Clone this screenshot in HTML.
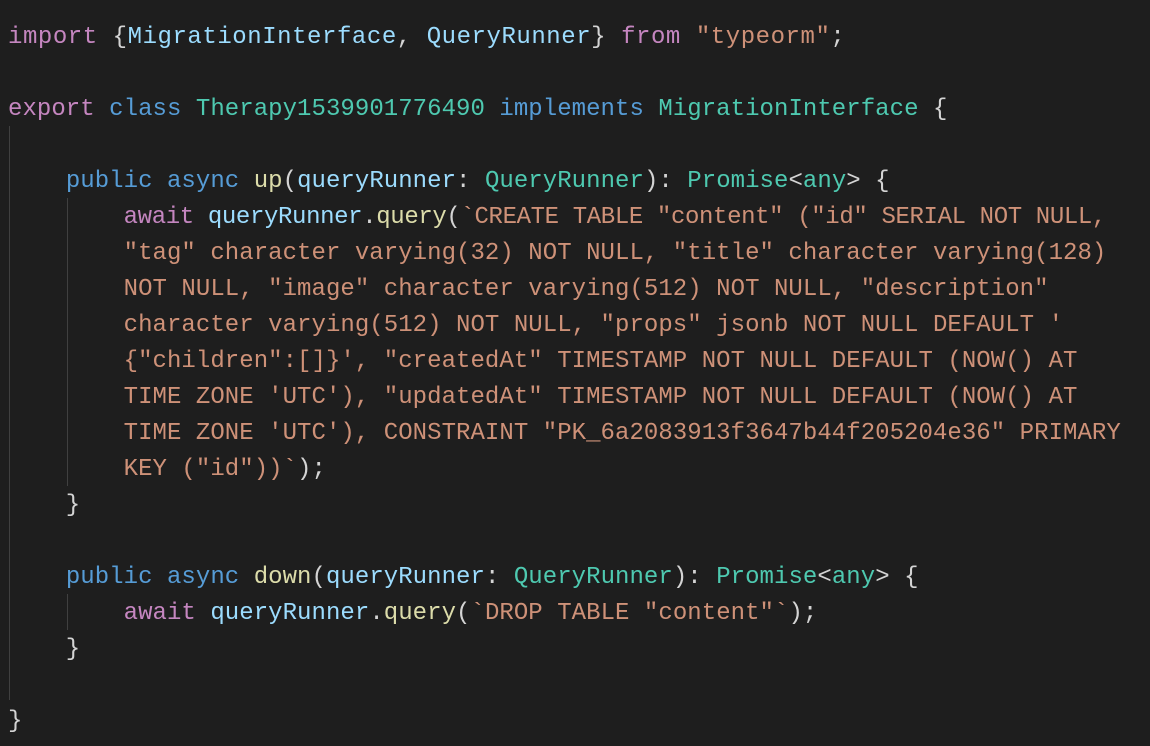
<!DOCTYPE html>
<html><head><meta charset="utf-8"><style>
html,body{margin:0;padding:0;background:#1e1e1e;width:1150px;height:746px;overflow:hidden}
pre{margin:0;position:absolute;left:8px;top:20px;font-family:"Liberation Mono",monospace;font-size:24px;line-height:36px;color:#d4d4d4;letter-spacing:0.05px}
.k{color:#c586c0}.b{color:#569cd6}.t{color:#4ec9b0}.v{color:#9cdcfe}.f{color:#dcdcaa}.s{color:#ce9178}
.g{position:absolute;width:1px;background:#404040}
</style></head><body>
<div class="g" style="left:9px;top:126px;height:574px"></div>
<div class="g" style="left:67px;top:198px;height:288px"></div>
<div class="g" style="left:67px;top:594px;height:36px"></div>
<pre><span style="letter-spacing:0.55px"><span class="k">import</span> {<span class="v">MigrationInterface</span>, <span class="v">QueryRunner</span>} <span class="k">from</span> <span class="s">"typeorm"</span>;</span>

<span class="k">export</span> <span class="b">class</span> <span class="t">Therapy1539901776490</span> <span class="b">implements</span> <span class="t">MigrationInterface</span> {

    <span class="b">public</span> <span class="b">async</span> <span class="f">up</span>(<span class="v">queryRunner</span>: <span class="t">QueryRunner</span>): <span class="t">Promise</span>&lt;<span class="t">any</span>&gt; {
        <span style="letter-spacing:-0.37px"><span class="k">await</span> <span class="v">queryRunner</span>.<span class="f">query</span>(<span class="s">`CREATE TABLE "content" ("id" SERIAL NOT NULL,</span></span>
<span class="s">        "tag" character varying(32) NOT NULL, "title" character varying(128)</span>
<span class="s">        NOT NULL, "image" character varying(512) NOT NULL, "description"</span>
<span class="s">        character varying(512) NOT NULL, "props" jsonb NOT NULL DEFAULT '</span>
<span class="s">        {"children":[]}', "createdAt" TIMESTAMP NOT NULL DEFAULT (NOW() AT</span>
<span class="s">        TIME ZONE 'UTC'), "updatedAt" TIMESTAMP NOT NULL DEFAULT (NOW() AT</span>
<span class="s">        TIME ZONE 'UTC'), CONSTRAINT "PK_6a2083913f3647b44f205204e36" PRIMARY</span>
<span class="s">        KEY ("id"))`</span>);
    }

    <span class="b">public</span> <span class="b">async</span> <span class="f">down</span>(<span class="v">queryRunner</span>: <span class="t">QueryRunner</span>): <span class="t">Promise</span>&lt;<span class="t">any</span>&gt; {
        <span class="k">await</span> <span class="v">queryRunner</span>.<span class="f">query</span>(<span class="s">`DROP TABLE "content"`</span>);
    }

}</pre>
</body></html>
